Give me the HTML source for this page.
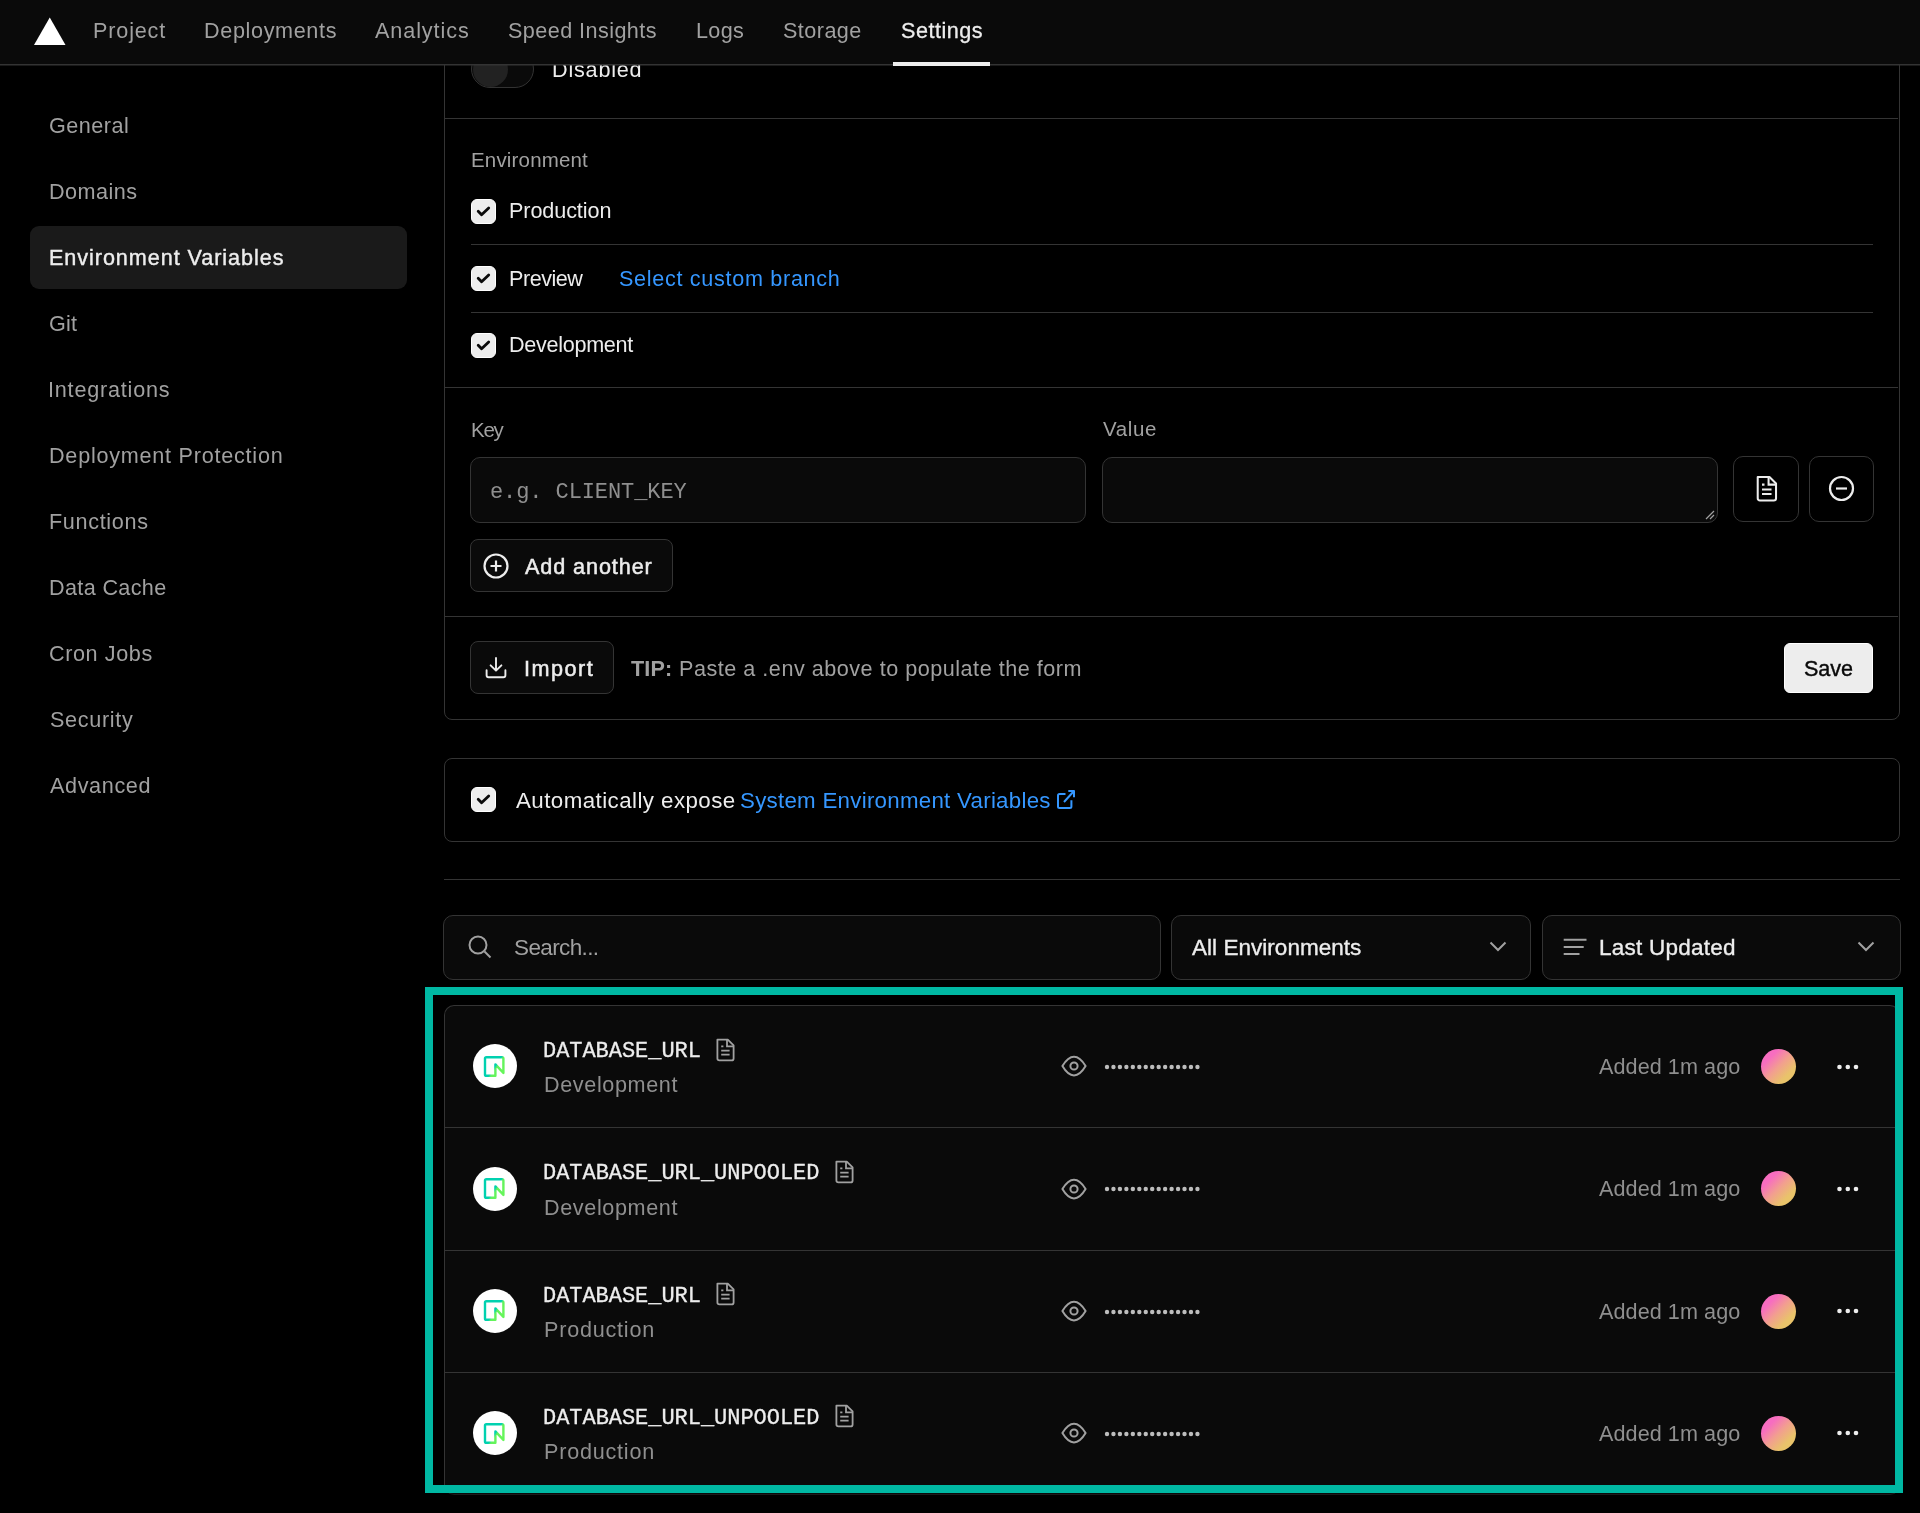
<!DOCTYPE html>
<html><head><meta charset="utf-8">
<style>
*{box-sizing:border-box;margin:0;padding:0}
html,body{width:1920px;height:1513px;overflow:hidden;background:#000;font-family:"Liberation Sans",sans-serif;color:#ededed}
.abs{position:absolute}
.t{position:absolute;white-space:nowrap;line-height:1;will-change:transform}
#hdr{position:absolute;left:0;top:0;width:1920px;height:65px;background:#0a0a0a;border-bottom:1px solid #333;box-shadow:0 1px 0 rgba(51,51,51,.5);z-index:5}
.line{position:absolute;height:1px;background:#343434}
.cb{position:absolute;width:25px;height:25px;border-radius:6px;background:#ededed;border:1px solid #fff}
.cb svg{position:absolute;left:-1px;top:-1px}
.box{position:absolute;border:1px solid #343434;background:#0a0a0a;border-radius:10px}
</style></head><body>

<!-- header -->
<div id="hdr">
  <svg class="abs" style="left:33px;top:17px" width="34" height="30" viewBox="0 0 34 30"><polygon points="16.75,0.5 32.5,28 1,28" fill="#fff"/></svg>
  <div class="abs" style="left:893px;top:62px;width:97px;height:4px;background:#ededed"></div>
</div>

<!-- sidebar -->
<div class="abs" style="left:30px;top:226px;width:377px;height:63px;background:#1a1a1a;border-radius:9px"></div>

<!-- form card -->
<div class="abs" style="left:444px;top:-20px;width:1456px;height:740px;border:1px solid #343434;border-radius:8px"></div>
<div class="abs" style="left:471px;top:50px;width:63px;height:38px;border:1px solid #333;border-radius:19px;background:#0a0a0a"></div>
<div class="abs" style="left:472.5px;top:51.5px;width:35px;height:35px;border-radius:50%;background:#222"></div>
<div class="line" style="left:445px;top:118px;width:1453px"></div>

<div class="cb" style="left:471px;top:199px"><svg width="25" height="25" viewBox="0 0 25 25"><path d="M7.2 12.2L10.6 15.8L17.7 8.9" stroke="#0a0a0a" stroke-width="2.8" fill="none" stroke-linecap="round" stroke-linejoin="round"/></svg></div>
<div class="line" style="left:471px;top:244px;width:1402px"></div>
<div class="cb" style="left:471px;top:266px"><svg width="25" height="25" viewBox="0 0 25 25"><path d="M7.2 12.2L10.6 15.8L17.7 8.9" stroke="#0a0a0a" stroke-width="2.8" fill="none" stroke-linecap="round" stroke-linejoin="round"/></svg></div>
<div class="line" style="left:471px;top:312px;width:1402px"></div>
<div class="cb" style="left:471px;top:333px"><svg width="25" height="25" viewBox="0 0 25 25"><path d="M7.2 12.2L10.6 15.8L17.7 8.9" stroke="#0a0a0a" stroke-width="2.8" fill="none" stroke-linecap="round" stroke-linejoin="round"/></svg></div>
<div class="line" style="left:445px;top:387px;width:1453px"></div>

<div class="box" style="left:470px;top:457px;width:616px;height:66px"></div>
<div class="box" style="left:1102px;top:457px;width:616px;height:66px"></div>
<svg class="abs" style="left:1704px;top:509px" width="12" height="12" viewBox="0 0 12 12"><path d="M2 10L10 2M6 10L10 6" stroke="#a1a1a1" stroke-width="1.2"/></svg>
<div class="box" style="left:1733px;top:456px;width:66px;height:66px;background:#000"></div>
<svg class="abs" style="left:1754.5px;top:474.3px" width="24.9" height="29.4" viewBox="0 0 22 26"><path d="M2.4 2.6H12.8L18.6 8.4V21.4Q18.6 23.4 16.6 23.4H4.4Q2.4 23.4 2.4 21.4Z" stroke="#ededed" stroke-width="1.8" fill="none" stroke-linejoin="round"/><path d="M12 2.6V9.4H18.6M6.2 9.4H8.4M6.2 13.7H14.6M6.2 17.7H14.6" stroke="#ededed" stroke-width="1.8" fill="none"/></svg>
<div class="box" style="left:1809px;top:456px;width:65px;height:66px;background:#000"></div>
<svg class="abs" style="left:1828px;top:475px" width="27" height="27" viewBox="0 0 27 27"><circle cx="13.5" cy="13.5" r="11.5" stroke="#ededed" stroke-width="2.2" fill="none"/><path d="M8 13.5h11" stroke="#ededed" stroke-width="2.2"/></svg>

<div class="box" style="left:470px;top:539px;width:203px;height:53px;border-radius:8px"></div>
<svg class="abs" style="left:482px;top:551.5px" width="28" height="28" viewBox="0 0 28 28"><circle cx="14" cy="14" r="11.5" stroke="#ededed" stroke-width="2.2" fill="none"/><path d="M14 8.5v11M8.5 14h11" stroke="#ededed" stroke-width="2.2"/></svg>
<div class="line" style="left:445px;top:616px;width:1453px"></div>

<div class="box" style="left:470px;top:641px;width:144px;height:53px;border-radius:8px"></div>
<svg class="abs" style="left:484px;top:656px" width="24" height="24" viewBox="0 0 24 24"><path d="M12 2v12.6M6.6 9.3l5.4 5.4 5.4-5.4M2.6 14.2v5q0 2 2 2h14.8q2 0 2-2v-5" stroke="#ededed" stroke-width="1.9" fill="none" stroke-linejoin="round" stroke-linecap="round"/></svg>
<div class="abs" style="left:1784px;top:643px;width:89px;height:50px;background:#ededed;border:1px solid #fff;border-radius:6px"></div>

<!-- auto expose card -->
<div class="abs" style="left:444px;top:758px;width:1456px;height:84px;border:1px solid #343434;border-radius:8px"></div>
<div class="cb" style="left:471px;top:787px"><svg width="25" height="25" viewBox="0 0 25 25"><path d="M7.2 12.2L10.6 15.8L17.7 8.9" stroke="#0a0a0a" stroke-width="2.8" fill="none" stroke-linecap="round" stroke-linejoin="round"/></svg></div>
<svg class="abs" style="left:1055px;top:789px" width="22" height="22" viewBox="0 0 22 22"><path d="M10.5 5.1H4.5Q3 5.1 3 6.6V17.5Q3 19 4.5 19H14.9Q16.4 19 16.4 17.5V11.3M9 13L19 2M13.3 2H19V8.2" stroke="#3597ff" stroke-width="2" fill="none" stroke-linejoin="round"/></svg>

<div class="line" style="left:444px;top:879px;width:1456px"></div>

<!-- filters -->
<div class="box" style="left:443px;top:915px;width:718px;height:65px"></div>
<svg class="abs" style="left:467px;top:934px" width="26" height="26" viewBox="0 0 26 26"><circle cx="11" cy="11" r="8.5" stroke="#a1a1a1" stroke-width="2" fill="none"/><path d="M17.5 17.5l6 6" stroke="#a1a1a1" stroke-width="2"/></svg>
<div class="box" style="left:1171px;top:915px;width:360px;height:65px"></div>
<svg class="abs" style="left:1488px;top:938px" width="20" height="16" viewBox="0 0 20 16"><path d="M2.5 4.5l7.5 7.5 7.5-7.5" stroke="#a1a1a1" stroke-width="2" fill="none"/></svg>
<div class="box" style="left:1542px;top:915px;width:359px;height:65px"></div>
<svg class="abs" style="left:1562px;top:934px" width="26" height="26" viewBox="0 0 26 26"><path d="M1.7 5.7h22.8M1.7 13h20M1.7 20h15.8" stroke="#a1a1a1" stroke-width="1.9"/></svg>
<svg class="abs" style="left:1856px;top:938px" width="20" height="16" viewBox="0 0 20 16"><path d="M2.5 4.5l7.5 7.5 7.5-7.5" stroke="#a1a1a1" stroke-width="2" fill="none"/></svg>

<!-- list -->
<div class="abs" style="left:444px;top:1005px;width:1456px;height:490px;background:#0a0a0a;border:1px solid #343434;border-bottom-color:#1c1c1c;border-radius:10px"></div>
<div class="abs" style="left:472.5px;top:1044.2px;width:44.2px;height:44.2px;border-radius:50%;background:#fff"></div>
<svg class="abs" style="left:482px;top:1053.7px" width="25" height="25" viewBox="0 0 25 25"><defs><linearGradient id="ng0" x1="0" y1="0" x2="1" y2="0.68"><stop offset="0.6" stop-color="#00d1b0"/><stop offset="0.69" stop-color="#62f25c"/><stop offset="1" stop-color="#66f65a"/></linearGradient></defs><path d="M13.4 21.8V10.4L21.4 18.9V4.6Q21.4 3.2 20 3.2H4.4Q3 3.2 3 4.6V20.4Q3 21.8 4.4 21.8Z" stroke="url(#ng0)" stroke-width="2.4" fill="none" stroke-linejoin="round"/></svg>
<svg class="abs" style="left:714.5px;top:1036.5px" width="22" height="26" viewBox="0 0 22 26"><path d="M2.4 2.6H12.8L18.6 8.4V21.4Q18.6 23.4 16.6 23.4H4.4Q2.4 23.4 2.4 21.4Z" stroke="#a1a1a1" stroke-width="1.8" fill="none" stroke-linejoin="round"/><path d="M12 2.6V9.4H18.6M6.2 9.4H8.4M6.2 13.7H14.6M6.2 17.7H14.6" stroke="#a1a1a1" stroke-width="1.8" fill="none"/></svg>
<svg class="abs" style="left:1059.7px;top:1054.4px" width="28" height="24" viewBox="0 0 28 24"><path d="M2.4 12Q8 2.7 14 2.7Q20 2.7 25.6 12Q20 21.4 14 21.4Q8 21.4 2.4 12Z" stroke="#a1a1a1" stroke-width="2" fill="none" stroke-linejoin="round"/><circle cx="14" cy="12" r="3.6" stroke="#a1a1a1" stroke-width="2" fill="none"/></svg>
<svg class="abs" style="left:1104.2px;top:1063.9px" width="100" height="6" viewBox="0 0 100 6"><circle cx="3.00" cy="3" r="2.2" fill="#bdbdbd"/><circle cx="9.46" cy="3" r="2.2" fill="#bdbdbd"/><circle cx="15.92" cy="3" r="2.2" fill="#bdbdbd"/><circle cx="22.38" cy="3" r="2.2" fill="#bdbdbd"/><circle cx="28.84" cy="3" r="2.2" fill="#bdbdbd"/><circle cx="35.30" cy="3" r="2.2" fill="#bdbdbd"/><circle cx="41.76" cy="3" r="2.2" fill="#bdbdbd"/><circle cx="48.22" cy="3" r="2.2" fill="#bdbdbd"/><circle cx="54.68" cy="3" r="2.2" fill="#bdbdbd"/><circle cx="61.14" cy="3" r="2.2" fill="#bdbdbd"/><circle cx="67.60" cy="3" r="2.2" fill="#bdbdbd"/><circle cx="74.06" cy="3" r="2.2" fill="#bdbdbd"/><circle cx="80.52" cy="3" r="2.2" fill="#bdbdbd"/><circle cx="86.98" cy="3" r="2.2" fill="#bdbdbd"/><circle cx="93.44" cy="3" r="2.2" fill="#bdbdbd"/></svg>
<div class="abs" style="left:1761px;top:1049.0px;width:35px;height:35px;border-radius:50%;background:linear-gradient(135deg,#f76dc0 25%,#f29f8f 50%,#e9c36a 75%)"></div>
<svg class="abs" style="left:1834px;top:1061.5px" width="28" height="10" viewBox="0 0 28 10"><circle cx="5.5" cy="5" r="2.3" fill="#ededed"/><circle cx="13.8" cy="5" r="2.3" fill="#ededed"/><circle cx="22" cy="5" r="2.3" fill="#ededed"/></svg>
<div class="line" style="left:445px;top:1127px;width:1450px"></div>
<div class="abs" style="left:472.5px;top:1166.5px;width:44.2px;height:44.2px;border-radius:50%;background:#fff"></div>
<svg class="abs" style="left:482px;top:1176.0px" width="25" height="25" viewBox="0 0 25 25"><defs><linearGradient id="ng1" x1="0" y1="0" x2="1" y2="0.68"><stop offset="0.6" stop-color="#00d1b0"/><stop offset="0.69" stop-color="#62f25c"/><stop offset="1" stop-color="#66f65a"/></linearGradient></defs><path d="M13.4 21.8V10.4L21.4 18.9V4.6Q21.4 3.2 20 3.2H4.4Q3 3.2 3 4.6V20.4Q3 21.8 4.4 21.8Z" stroke="url(#ng1)" stroke-width="2.4" fill="none" stroke-linejoin="round"/></svg>
<svg class="abs" style="left:834.0px;top:1158.8px" width="22" height="26" viewBox="0 0 22 26"><path d="M2.4 2.6H12.8L18.6 8.4V21.4Q18.6 23.4 16.6 23.4H4.4Q2.4 23.4 2.4 21.4Z" stroke="#a1a1a1" stroke-width="1.8" fill="none" stroke-linejoin="round"/><path d="M12 2.6V9.4H18.6M6.2 9.4H8.4M6.2 13.7H14.6M6.2 17.7H14.6" stroke="#a1a1a1" stroke-width="1.8" fill="none"/></svg>
<svg class="abs" style="left:1059.7px;top:1176.7px" width="28" height="24" viewBox="0 0 28 24"><path d="M2.4 12Q8 2.7 14 2.7Q20 2.7 25.6 12Q20 21.4 14 21.4Q8 21.4 2.4 12Z" stroke="#a1a1a1" stroke-width="2" fill="none" stroke-linejoin="round"/><circle cx="14" cy="12" r="3.6" stroke="#a1a1a1" stroke-width="2" fill="none"/></svg>
<svg class="abs" style="left:1104.2px;top:1186.2px" width="100" height="6" viewBox="0 0 100 6"><circle cx="3.00" cy="3" r="2.2" fill="#bdbdbd"/><circle cx="9.46" cy="3" r="2.2" fill="#bdbdbd"/><circle cx="15.92" cy="3" r="2.2" fill="#bdbdbd"/><circle cx="22.38" cy="3" r="2.2" fill="#bdbdbd"/><circle cx="28.84" cy="3" r="2.2" fill="#bdbdbd"/><circle cx="35.30" cy="3" r="2.2" fill="#bdbdbd"/><circle cx="41.76" cy="3" r="2.2" fill="#bdbdbd"/><circle cx="48.22" cy="3" r="2.2" fill="#bdbdbd"/><circle cx="54.68" cy="3" r="2.2" fill="#bdbdbd"/><circle cx="61.14" cy="3" r="2.2" fill="#bdbdbd"/><circle cx="67.60" cy="3" r="2.2" fill="#bdbdbd"/><circle cx="74.06" cy="3" r="2.2" fill="#bdbdbd"/><circle cx="80.52" cy="3" r="2.2" fill="#bdbdbd"/><circle cx="86.98" cy="3" r="2.2" fill="#bdbdbd"/><circle cx="93.44" cy="3" r="2.2" fill="#bdbdbd"/></svg>
<div class="abs" style="left:1761px;top:1171.3px;width:35px;height:35px;border-radius:50%;background:linear-gradient(135deg,#f76dc0 25%,#f29f8f 50%,#e9c36a 75%)"></div>
<svg class="abs" style="left:1834px;top:1183.8px" width="28" height="10" viewBox="0 0 28 10"><circle cx="5.5" cy="5" r="2.3" fill="#ededed"/><circle cx="13.8" cy="5" r="2.3" fill="#ededed"/><circle cx="22" cy="5" r="2.3" fill="#ededed"/></svg>
<div class="line" style="left:445px;top:1250px;width:1450px"></div>
<div class="abs" style="left:472.5px;top:1288.8px;width:44.2px;height:44.2px;border-radius:50%;background:#fff"></div>
<svg class="abs" style="left:482px;top:1298.3px" width="25" height="25" viewBox="0 0 25 25"><defs><linearGradient id="ng2" x1="0" y1="0" x2="1" y2="0.68"><stop offset="0.6" stop-color="#00d1b0"/><stop offset="0.69" stop-color="#62f25c"/><stop offset="1" stop-color="#66f65a"/></linearGradient></defs><path d="M13.4 21.8V10.4L21.4 18.9V4.6Q21.4 3.2 20 3.2H4.4Q3 3.2 3 4.6V20.4Q3 21.8 4.4 21.8Z" stroke="url(#ng2)" stroke-width="2.4" fill="none" stroke-linejoin="round"/></svg>
<svg class="abs" style="left:714.5px;top:1281.1px" width="22" height="26" viewBox="0 0 22 26"><path d="M2.4 2.6H12.8L18.6 8.4V21.4Q18.6 23.4 16.6 23.4H4.4Q2.4 23.4 2.4 21.4Z" stroke="#a1a1a1" stroke-width="1.8" fill="none" stroke-linejoin="round"/><path d="M12 2.6V9.4H18.6M6.2 9.4H8.4M6.2 13.7H14.6M6.2 17.7H14.6" stroke="#a1a1a1" stroke-width="1.8" fill="none"/></svg>
<svg class="abs" style="left:1059.7px;top:1299.0px" width="28" height="24" viewBox="0 0 28 24"><path d="M2.4 12Q8 2.7 14 2.7Q20 2.7 25.6 12Q20 21.4 14 21.4Q8 21.4 2.4 12Z" stroke="#a1a1a1" stroke-width="2" fill="none" stroke-linejoin="round"/><circle cx="14" cy="12" r="3.6" stroke="#a1a1a1" stroke-width="2" fill="none"/></svg>
<svg class="abs" style="left:1104.2px;top:1308.5px" width="100" height="6" viewBox="0 0 100 6"><circle cx="3.00" cy="3" r="2.2" fill="#bdbdbd"/><circle cx="9.46" cy="3" r="2.2" fill="#bdbdbd"/><circle cx="15.92" cy="3" r="2.2" fill="#bdbdbd"/><circle cx="22.38" cy="3" r="2.2" fill="#bdbdbd"/><circle cx="28.84" cy="3" r="2.2" fill="#bdbdbd"/><circle cx="35.30" cy="3" r="2.2" fill="#bdbdbd"/><circle cx="41.76" cy="3" r="2.2" fill="#bdbdbd"/><circle cx="48.22" cy="3" r="2.2" fill="#bdbdbd"/><circle cx="54.68" cy="3" r="2.2" fill="#bdbdbd"/><circle cx="61.14" cy="3" r="2.2" fill="#bdbdbd"/><circle cx="67.60" cy="3" r="2.2" fill="#bdbdbd"/><circle cx="74.06" cy="3" r="2.2" fill="#bdbdbd"/><circle cx="80.52" cy="3" r="2.2" fill="#bdbdbd"/><circle cx="86.98" cy="3" r="2.2" fill="#bdbdbd"/><circle cx="93.44" cy="3" r="2.2" fill="#bdbdbd"/></svg>
<div class="abs" style="left:1761px;top:1293.6px;width:35px;height:35px;border-radius:50%;background:linear-gradient(135deg,#f76dc0 25%,#f29f8f 50%,#e9c36a 75%)"></div>
<svg class="abs" style="left:1834px;top:1306.1px" width="28" height="10" viewBox="0 0 28 10"><circle cx="5.5" cy="5" r="2.3" fill="#ededed"/><circle cx="13.8" cy="5" r="2.3" fill="#ededed"/><circle cx="22" cy="5" r="2.3" fill="#ededed"/></svg>
<div class="line" style="left:445px;top:1372px;width:1450px"></div>
<div class="abs" style="left:472.5px;top:1411.1px;width:44.2px;height:44.2px;border-radius:50%;background:#fff"></div>
<svg class="abs" style="left:482px;top:1420.6px" width="25" height="25" viewBox="0 0 25 25"><defs><linearGradient id="ng3" x1="0" y1="0" x2="1" y2="0.68"><stop offset="0.6" stop-color="#00d1b0"/><stop offset="0.69" stop-color="#62f25c"/><stop offset="1" stop-color="#66f65a"/></linearGradient></defs><path d="M13.4 21.8V10.4L21.4 18.9V4.6Q21.4 3.2 20 3.2H4.4Q3 3.2 3 4.6V20.4Q3 21.8 4.4 21.8Z" stroke="url(#ng3)" stroke-width="2.4" fill="none" stroke-linejoin="round"/></svg>
<svg class="abs" style="left:834.0px;top:1403.4px" width="22" height="26" viewBox="0 0 22 26"><path d="M2.4 2.6H12.8L18.6 8.4V21.4Q18.6 23.4 16.6 23.4H4.4Q2.4 23.4 2.4 21.4Z" stroke="#a1a1a1" stroke-width="1.8" fill="none" stroke-linejoin="round"/><path d="M12 2.6V9.4H18.6M6.2 9.4H8.4M6.2 13.7H14.6M6.2 17.7H14.6" stroke="#a1a1a1" stroke-width="1.8" fill="none"/></svg>
<svg class="abs" style="left:1059.7px;top:1421.3px" width="28" height="24" viewBox="0 0 28 24"><path d="M2.4 12Q8 2.7 14 2.7Q20 2.7 25.6 12Q20 21.4 14 21.4Q8 21.4 2.4 12Z" stroke="#a1a1a1" stroke-width="2" fill="none" stroke-linejoin="round"/><circle cx="14" cy="12" r="3.6" stroke="#a1a1a1" stroke-width="2" fill="none"/></svg>
<svg class="abs" style="left:1104.2px;top:1430.8px" width="100" height="6" viewBox="0 0 100 6"><circle cx="3.00" cy="3" r="2.2" fill="#bdbdbd"/><circle cx="9.46" cy="3" r="2.2" fill="#bdbdbd"/><circle cx="15.92" cy="3" r="2.2" fill="#bdbdbd"/><circle cx="22.38" cy="3" r="2.2" fill="#bdbdbd"/><circle cx="28.84" cy="3" r="2.2" fill="#bdbdbd"/><circle cx="35.30" cy="3" r="2.2" fill="#bdbdbd"/><circle cx="41.76" cy="3" r="2.2" fill="#bdbdbd"/><circle cx="48.22" cy="3" r="2.2" fill="#bdbdbd"/><circle cx="54.68" cy="3" r="2.2" fill="#bdbdbd"/><circle cx="61.14" cy="3" r="2.2" fill="#bdbdbd"/><circle cx="67.60" cy="3" r="2.2" fill="#bdbdbd"/><circle cx="74.06" cy="3" r="2.2" fill="#bdbdbd"/><circle cx="80.52" cy="3" r="2.2" fill="#bdbdbd"/><circle cx="86.98" cy="3" r="2.2" fill="#bdbdbd"/><circle cx="93.44" cy="3" r="2.2" fill="#bdbdbd"/></svg>
<div class="abs" style="left:1761px;top:1415.9px;width:35px;height:35px;border-radius:50%;background:linear-gradient(135deg,#f76dc0 25%,#f29f8f 50%,#e9c36a 75%)"></div>
<svg class="abs" style="left:1834px;top:1428.4px" width="28" height="10" viewBox="0 0 28 10"><circle cx="5.5" cy="5" r="2.3" fill="#ededed"/><circle cx="13.8" cy="5" r="2.3" fill="#ededed"/><circle cx="22" cy="5" r="2.3" fill="#ededed"/></svg>

<div class="t" style="left:92.75px;top:20.00px;font-size:21.6px;letter-spacing:0.841px;color:#a1a1a1;z-index:6">Project</div>
<div class="t" style="left:203.60px;top:20.00px;font-size:21.6px;letter-spacing:0.643px;color:#a1a1a1;z-index:6">Deployments</div>
<div class="t" style="left:375.30px;top:20.00px;font-size:21.6px;letter-spacing:0.911px;color:#a1a1a1;z-index:6">Analytics</div>
<div class="t" style="left:508.30px;top:20.00px;font-size:21.6px;letter-spacing:0.434px;color:#a1a1a1;z-index:6">Speed Insights</div>
<div class="t" style="left:695.70px;top:20.00px;font-size:21.6px;letter-spacing:0.357px;color:#a1a1a1;z-index:6">Logs</div>
<div class="t" style="left:783.00px;top:20.00px;font-size:21.6px;letter-spacing:0.446px;color:#a1a1a1;z-index:6">Storage</div>
<div class="t" style="left:900.80px;top:20.00px;font-size:21.6px;letter-spacing:0.496px;color:#ededed;z-index:6;-webkit-text-stroke:0.3px #ededed">Settings</div>
<div class="t" style="left:48.60px;top:115.00px;font-size:21.6px;letter-spacing:0.479px;color:#a1a1a1">General</div>
<div class="t" style="left:48.60px;top:181.00px;font-size:21.6px;letter-spacing:0.465px;color:#a1a1a1">Domains</div>
<div class="t" style="left:48.60px;top:247.00px;font-size:21.6px;letter-spacing:0.943px;color:#ededed;-webkit-text-stroke:0.4px #ededed">Environment Variables</div>
<div class="t" style="left:48.60px;top:313.00px;font-size:21.6px;letter-spacing:0.153px;color:#a1a1a1">Git</div>
<div class="t" style="left:47.60px;top:379.00px;font-size:21.6px;letter-spacing:0.796px;color:#a1a1a1">Integrations</div>
<div class="t" style="left:48.60px;top:445.00px;font-size:21.6px;letter-spacing:0.763px;color:#a1a1a1">Deployment Protection</div>
<div class="t" style="left:48.60px;top:511.00px;font-size:21.6px;letter-spacing:0.672px;color:#a1a1a1">Functions</div>
<div class="t" style="left:48.60px;top:577.00px;font-size:21.6px;letter-spacing:0.353px;color:#a1a1a1">Data Cache</div>
<div class="t" style="left:48.60px;top:643.00px;font-size:21.6px;letter-spacing:0.598px;color:#a1a1a1">Cron Jobs</div>
<div class="t" style="left:49.60px;top:709.00px;font-size:21.6px;letter-spacing:0.685px;color:#a1a1a1">Security</div>
<div class="t" style="left:49.60px;top:775.00px;font-size:21.6px;letter-spacing:0.638px;color:#a1a1a1">Advanced</div>
<div class="t" style="left:552.40px;top:59.00px;font-size:21.6px;letter-spacing:0.798px;color:#ededed">Disabled</div>
<div class="t" style="left:471.00px;top:150.00px;font-size:20.5px;letter-spacing:0.171px;color:#a1a1a1">Environment</div>
<div class="t" style="left:508.60px;top:200.00px;font-size:21.6px;letter-spacing:-0.092px;color:#ededed">Production</div>
<div class="t" style="left:508.60px;top:268.00px;font-size:21.6px;letter-spacing:-0.484px;color:#ededed">Preview</div>
<div class="t" style="left:619.40px;top:268.00px;font-size:21.6px;letter-spacing:0.693px;color:#3597ff">Select custom branch</div>
<div class="t" style="left:508.60px;top:334.00px;font-size:21.6px;letter-spacing:-0.293px;color:#ededed">Development</div>
<div class="t" style="left:471.20px;top:420.00px;font-size:20.5px;letter-spacing:-1.287px;color:#a1a1a1">Key</div>
<div class="t" style="left:1102.75px;top:419.00px;font-size:20.5px;letter-spacing:0.610px;color:#a1a1a1">Value</div>
<div class="t" style="left:489.50px;top:482.00px;font-size:22.0px;letter-spacing:-0.095px;color:#8f8f8f;font-family:'Liberation Mono',monospace">e.g. CLIENT_KEY</div>
<div class="t" style="left:525.00px;top:556.00px;font-size:21.6px;letter-spacing:0.913px;color:#ededed;-webkit-text-stroke:0.5px #ededed">Add another</div>
<div class="t" style="left:523.70px;top:658.00px;font-size:21.6px;letter-spacing:1.501px;color:#ededed;-webkit-text-stroke:0.5px #ededed">Import</div>
<div class="t" style="left:631.25px;top:658.00px;font-size:21.6px;letter-spacing:0.136px;color:#a1a1a1;font-weight:bold">TIP:</div>
<div class="t" style="left:678.50px;top:658.00px;font-size:21.6px;letter-spacing:0.514px;color:#a1a1a1">Paste a .env above to populate the form</div>
<div class="t" style="left:1804.00px;top:658.00px;font-size:21.6px;letter-spacing:-0.070px;color:#0a0a0a;-webkit-text-stroke:0.4px #0a0a0a">Save</div>
<div class="t" style="left:515.60px;top:790.00px;font-size:22.3px;letter-spacing:0.448px;color:#ededed">Automatically expose</div>
<div class="t" style="left:740.25px;top:790.00px;font-size:22.3px;letter-spacing:0.270px;color:#3597ff">System Environment Variables</div>
<div class="t" style="left:513.60px;top:937.00px;font-size:22.5px;letter-spacing:-0.624px;color:#a1a1a1">Search...</div>
<div class="t" style="left:1191.70px;top:937.00px;font-size:22.5px;letter-spacing:0.036px;color:#ededed;-webkit-text-stroke:0.35px #ededed">All Environments</div>
<div class="t" style="left:1598.60px;top:937.00px;font-size:22.5px;letter-spacing:0.233px;color:#ededed;-webkit-text-stroke:0.35px #ededed">Last Updated</div>
<div class="t" style="left:543.30px;top:1041.00px;font-size:22.0px;letter-spacing:-0.048px;color:#ededed;font-family:'Liberation Mono',monospace;-webkit-text-stroke:0.3px #ededed">DATABASE_URL</div>
<div class="t" style="left:543.60px;top:1074.00px;font-size:21.6px;letter-spacing:0.617px;color:#8f8f8f">Development</div>
<div class="t" style="left:1598.75px;top:1056.00px;font-size:21.6px;letter-spacing:0.072px;color:#8f8f8f">Added 1m ago</div>
<div class="t" style="left:543.30px;top:1163.00px;font-size:22.0px;letter-spacing:-0.042px;color:#ededed;font-family:'Liberation Mono',monospace;-webkit-text-stroke:0.3px #ededed">DATABASE_URL_UNPOOLED</div>
<div class="t" style="left:543.60px;top:1197.00px;font-size:21.6px;letter-spacing:0.617px;color:#8f8f8f">Development</div>
<div class="t" style="left:1598.75px;top:1178.00px;font-size:21.6px;letter-spacing:0.072px;color:#8f8f8f">Added 1m ago</div>
<div class="t" style="left:543.30px;top:1286.00px;font-size:22.0px;letter-spacing:-0.048px;color:#ededed;font-family:'Liberation Mono',monospace;-webkit-text-stroke:0.3px #ededed">DATABASE_URL</div>
<div class="t" style="left:543.60px;top:1319.00px;font-size:21.6px;letter-spacing:0.775px;color:#8f8f8f">Production</div>
<div class="t" style="left:1598.75px;top:1301.00px;font-size:21.6px;letter-spacing:0.072px;color:#8f8f8f">Added 1m ago</div>
<div class="t" style="left:543.30px;top:1408.00px;font-size:22.0px;letter-spacing:-0.042px;color:#ededed;font-family:'Liberation Mono',monospace;-webkit-text-stroke:0.3px #ededed">DATABASE_URL_UNPOOLED</div>
<div class="t" style="left:543.60px;top:1441.00px;font-size:21.6px;letter-spacing:0.775px;color:#8f8f8f">Production</div>
<div class="t" style="left:1598.75px;top:1423.00px;font-size:21.6px;letter-spacing:0.072px;color:#8f8f8f">Added 1m ago</div>

<!-- teal highlight -->
<div class="abs" style="left:425px;top:987px;width:1478px;height:506px;border:8px solid #00b8a3;z-index:10"></div>
</body></html>
